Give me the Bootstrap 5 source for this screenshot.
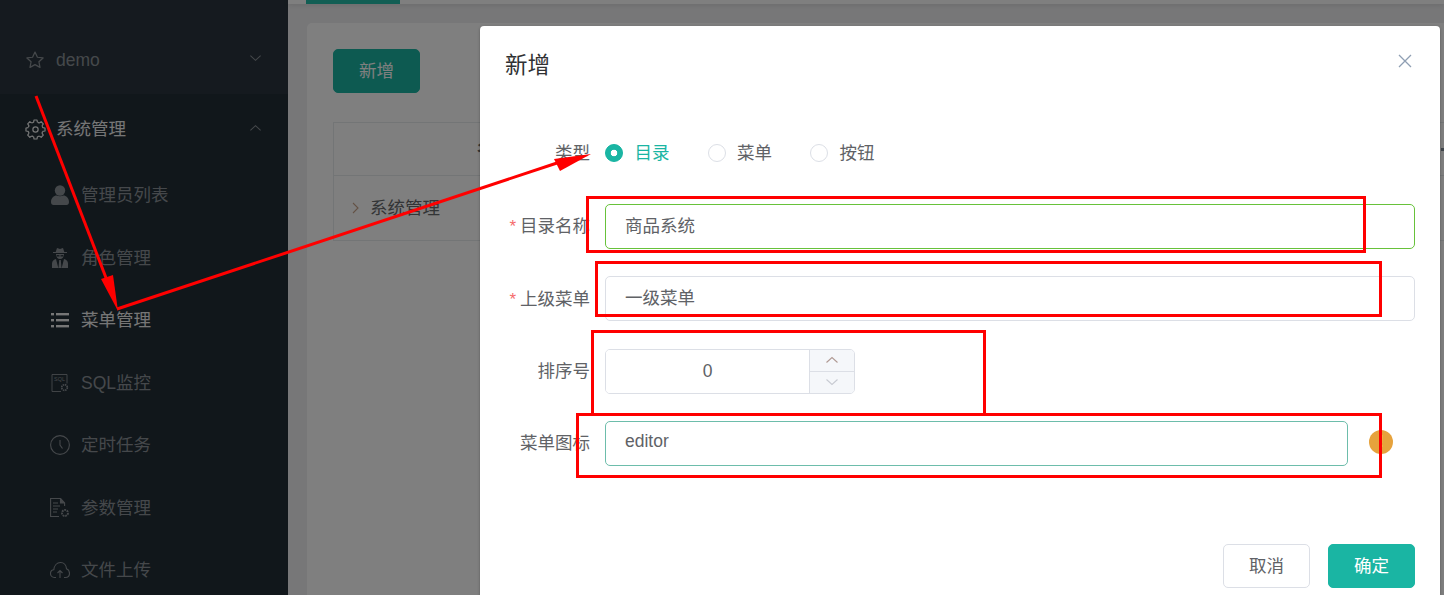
<!DOCTYPE html>
<html lang="zh">
<head>
<meta charset="utf-8">
<title>新增</title>
<link href="https://cdn.jsdelivr.net/npm/bootstrap@5.3.0/dist/css/bootstrap.min.css" rel="stylesheet">
<style>
html,body{height:595px;overflow:hidden}
body{font-family:"Liberation Sans","Noto Sans CJK SC",sans-serif;font-size:17.5px;color:#676a6c;background:#efeff1}
.stage{height:595px;width:1444px;overflow:hidden}
.side{width:288px;flex:none;background:#222e37;color:#8b9196;height:595px;overflow:hidden}
.side-top{height:94px;flex:none;background:#2a353e;padding:26px 26px 0 24px}
.side-group{height:70px;flex:none;padding:0 26px 0 24px;color:#eceded}
.side-top .ico,.side-group .ico{width:22px;margin-right:10px}
.chev{margin-left:auto;margin-top:-5px;display:flex}
.side-group .chev{margin-top:-3px;color:#8b9196}
.side-item{height:62.5px;padding-left:50px;flex:none}
.side-item .ico{width:20px;margin-right:11px}
.side-item.on{color:#eceded}
.ico{display:flex;justify-content:center;flex:none}
.content{flex:1;min-width:0;padding-left:19px}
.tabbar{height:4px;margin-left:-19px;background:#fff;box-shadow:0 1px 5px rgba(0,0,0,.12)}
.tabmark{width:94px;height:4px;margin-left:18px;background:#25bca8}
.sheet{margin-top:19px;margin-right:-40px;height:572px;overflow:hidden;background:#fff;border-radius:5px 5px 0 0;padding:26px}
.btn-teal{--bs-btn-bg:#1ab5a3;--bs-btn-border-color:#1ab5a3;--bs-btn-color:#fff;--bs-btn-hover-bg:#1ab5a3;--bs-btn-hover-border-color:#1ab5a3;--bs-btn-hover-color:#fff;--bs-btn-font-size:17.5px;--bs-btn-border-radius:5px;width:87px;height:44px;padding:0}
.btn-plain{--bs-btn-bg:#fff;--bs-btn-border-color:#dcdfe6;--bs-btn-color:#606266;--bs-btn-hover-bg:#fff;--bs-btn-hover-border-color:#dcdfe6;--bs-btn-hover-color:#606266;--bs-btn-font-size:17.5px;--bs-btn-border-radius:5px;width:87px;height:44px;padding:0}
.grid{margin-top:29px;width:1200px;margin-bottom:0;--bs-table-border-color:#e7eaec;color:#676a6c}
.grid th{height:53px;font-weight:600;vertical-align:middle;padding:0}
.grid td{height:65px;vertical-align:middle;padding:0 0 0 18px}
.grid .col-name{width:288px;padding-left:143px;white-space:nowrap}
.grid .col-rest{padding-left:819px}
.tree-row{gap:10px}
.tick{display:block;width:3px;height:3px;background:#7e8a96;margin-top:1px}
.veil{position:absolute;inset:0;background:rgba(0,0,0,.5)}
.dlg{position:absolute;left:480px;top:26px;width:960px;height:569px;background:#fff;border-radius:4px 4px 0 0;box-shadow:0 1px 3px rgba(0,0,0,.3);padding:0 25px}
.dlg-head{height:79px;padding-top:22px}
.dlg-title{font-size:22.5px;line-height:36px;color:#303133;margin:0;font-weight:400}
.closer{position:absolute;right:28px;top:28px;width:14px;height:14px;padding:0;border:0;background:none;display:flex}
.dlg-body{padding-top:25.5px}
.frow{margin-bottom:27.25px;min-height:45px}
.frow.first{margin-bottom:28.5px}
.flabel{width:85px;flex:none;margin:0;margin-right:15px;text-align:right;color:#606266;white-space:nowrap}
.flabel i{font-style:normal;color:#f56c6c;font-size:17px;line-height:1;margin-right:4px}
.ctl{flex:1;min-width:0}
.form-control.fld{height:45px;border-radius:5px;border-color:#dcdfe6;font-size:17.5px;color:#606266;padding:0 20px 3px 19px;box-shadow:none}
.form-control.fld.han{padding-bottom:5px}
.fld.ok{border-color:#67c23a}
.fld.foc{border-color:#6dbdab}
.radio-set{gap:38px}
.radio-opt{padding:0;margin:0;min-height:0;gap:11.5px;color:#606266}
.radio-opt .form-check-input{float:none;margin:0;width:18px;height:18px;border-color:#dcdfe6}
.radio-opt .form-check-input:checked{background-color:#1ab5a3;border-color:#1ab5a3;background-image:radial-gradient(circle,#fff 0,#fff 3px,#1ab5a3 3.6px)}
.radio-opt .form-check-label{line-height:24px}
.radio-opt.sel .form-check-label{color:#1ab5a3}
.spin{width:250px;height:45px;border:1px solid #dcdfe6;border-radius:5px;overflow:hidden}
.spin input{flex:1;min-width:0;border:0;outline:0;text-align:center;color:#606266;font-size:17.5px;background:#fff;padding:0}
.spin-btns{width:45px;flex:none;border-left:1px solid #dcdfe6;background:#f5f7fa}
.spin-btns span{flex:1;display:flex;align-items:center;justify-content:center}
.spin-btns span+span{border-top:1px solid #dcdfe6}
.warn{width:24px;height:24px;border-radius:50%;background:#e6a23c;color:#fff;font-size:16px;font-weight:700;flex:none;margin:-3px 22px 0 21px}
.dlg-foot{position:absolute;right:25px;top:518px;gap:18px}
.marks{position:absolute;left:0;top:0;pointer-events:none}
</style>
</head>
<body class="position-relative">
<div class="stage d-flex">
  <aside class="side d-flex flex-column">
    <div class="side-top d-flex align-items-center">
      <span class="ico"><svg width="20" height="20" viewBox="0 0 24 24" fill="none" stroke="currentColor" stroke-width="1.5" stroke-linejoin="round"><path d="M12 2.500l2.900 6.200 6.800.8-5 4.600 1.300 6.700L12 17.500l-6 3.300 1.300-6.700-5-4.600 6.800-.8z"/></svg></span>
      <span>demo</span>
      <span class="chev"><svg width="13" height="8" viewBox="0 0 14 8" fill="none" stroke="currentColor" stroke-width="1.100"><path d="M1.500 1.500L7 6.500l5.500-5"/></svg></span>
    </div>
    <div class="side-group d-flex align-items-center">
      <span class="ico"><svg width="21" height="21" viewBox="0 0 24 24" fill="none" stroke="currentColor" stroke-width="1.400" stroke-linejoin="round"><circle cx="12" cy="12" r="8.500" stroke-dasharray="0 2.225 2.225 2.225"/><path id="tooth" d="M9.800 3.790L10.280 1.130H13.720L14.200 3.790"/><path transform="rotate(45 12 12)" d="M9.800 3.790L10.280 1.130H13.720L14.200 3.790"/><path transform="rotate(90 12 12)" d="M9.800 3.790L10.280 1.130H13.720L14.200 3.790"/><path transform="rotate(135 12 12)" d="M9.800 3.790L10.280 1.130H13.720L14.200 3.790"/><path transform="rotate(180 12 12)" d="M9.800 3.790L10.280 1.130H13.720L14.200 3.790"/><path transform="rotate(225 12 12)" d="M9.800 3.790L10.280 1.130H13.720L14.200 3.790"/><path transform="rotate(270 12 12)" d="M9.800 3.790L10.280 1.130H13.720L14.200 3.790"/><path transform="rotate(315 12 12)" d="M9.800 3.790L10.280 1.130H13.720L14.200 3.790"/><circle cx="12" cy="12" r="3"/></svg></span>
      <span>系统管理</span>
      <span class="chev"><svg width="13" height="8" viewBox="0 0 14 8" fill="none" stroke="currentColor" stroke-width="1.100"><path d="M1.500 6.500L7 1.500l5.500 5"/></svg></span>
    </div>
    <div class="side-item d-flex align-items-center"><span class="ico"><svg width="18" height="20" viewBox="0 0 18 20" fill="currentColor"><circle cx="9" cy="5.500" r="5.200"/><path d="M0 17c0-4 3-6.500 5.500-6.500 2 1 5 1 7 0C15 10.500 18 13 18 17c0 1.800-1 3-2.500 3h-13C1 20 0 18.800 0 17z"/></svg></span><span>管理员列表</span></div>
    <div class="side-item d-flex align-items-center"><span class="ico"><svg width="16" height="20" viewBox="0 0 16 20" fill="currentColor"><path d="M5 0l3 1 3-1 1.300 4H15v1H1V4h2.700z"/><path fill-rule="evenodd" d="M4 6h8c0 3-1.700 5-4 5S4 9 4 6zm.8 1v1.500h2.700V7.300zm3.700.3v1.200h2.700V7z"/><path d="M0 20v-4.500C0 13 2 11.500 4 11l2.300 9zm16 0v-4.500c0-2.500-2-4-4-4.500l-2.300 9zM7.200 12h1.600l.7 8h-3z"/></svg></span><span>角色管理</span></div>
    <div class="side-item on d-flex align-items-center"><span class="ico"><svg width="18" height="16" viewBox="0 0 18 16" fill="currentColor"><rect x="0" y="1" width="3" height="2.400"/><rect x="5" y="1" width="13" height="2.400"/><rect x="0" y="7" width="3" height="2.400"/><rect x="5" y="7" width="13" height="2.400"/><rect x="0" y="13" width="3" height="2.400"/><rect x="5" y="13" width="13" height="2.400"/></svg></span><span>菜单管理</span></div>
    <div class="side-item d-flex align-items-center"><span class="ico"><svg width="18" height="18" viewBox="0 0 18 18" fill="none" stroke="currentColor"><path d="M10 17.500H1V.5h15v9" stroke-width=".9"/><text x="3" y="7" font-size="5.500" fill="currentColor" stroke="none" font-family="Liberation Sans">SQL</text><circle cx="13.500" cy="13.500" r="2.800" stroke-width="1.700" stroke-dasharray="1.500 .7"/></svg></span><span>SQL监控</span></div>
    <div class="side-item d-flex align-items-center"><span class="ico"><svg width="20" height="20" viewBox="0 0 20 20" fill="none" stroke="currentColor" stroke-width="1.100"><circle cx="10" cy="10" r="9.400"/><path d="M10 5v5l2.500 3.500"/></svg></span><span>定时任务</span></div>
    <div class="side-item d-flex align-items-center"><span class="ico"><svg width="20" height="20" viewBox="0 0 20 20" fill="none" stroke="currentColor" stroke-width="1.100"><path d="M9 18.500H.6V.5h10l4 4.500v3"/><path d="M10.500.5v4.500h4" fill="currentColor"/><path d="M3 5h5M3 8h7M3 11h5M3 14h4"/><circle cx="15" cy="15" r="3" stroke-width="1.900" stroke-dasharray="1.800 .8"/></svg></span><span>参数管理</span></div>
    <div class="side-item d-flex align-items-center"><span class="ico"><svg width="20" height="18" viewBox="0 0 20 18" fill="none" stroke="currentColor" stroke-width="1.100"><path d="M6 16.500H4.500C2 16.500.5 14.500.5 12.500c0-2 1.500-3.500 3.300-3.700C4.200 4.500 7 1.500 10.500 1.500s5.800 2.800 6 6.300c1.800.7 3 2.500 3 4.500 0 2.500-1.800 4.200-4 4.200H14"/><path d="M10 17v-7M7.500 12L10 9.500l2.500 2.500"/></svg></span><span>文件上传</span></div>
  </aside>
  <main class="content">
    <div class="tabbar"><div class="tabmark"></div></div>
    <section class="sheet">
      <button class="btn btn-teal" type="button">新增</button>
      <table class="table table-bordered grid">
        <thead><tr><th class="col-name">名称</th><th class="col-rest"><span class="tick"></span></th></tr></thead>
        <tbody><tr><td><span class="d-inline-flex align-items-center tree-row"><svg width="8" height="12" viewBox="0 0 8 12" fill="none" stroke="#c9a48a" stroke-width="1.100"><path d="M1 1l5 5-5 5"/></svg><span>系统管理</span></span></td><td></td></tr></tbody>
      </table>
    </section>
  </main>
</div>
<div class="veil"></div>
<div class="dlg">
  <div class="dlg-head"><h5 class="dlg-title">新增</h5></div>
  <button class="closer" type="button" aria-label="关闭"><svg width="14" height="14" viewBox="0 0 14 14" stroke="#8f9fb3" stroke-width="1.300" fill="none"><path d="M1 1l12 12M13 1L1 13"/></svg></button>
  <form class="dlg-body">
    <div class="frow first d-flex align-items-center">
      <label class="flabel">类型</label>
      <div class="ctl d-flex radio-set">
        <div class="form-check radio-opt sel d-flex align-items-center"><input class="form-check-input" type="radio" name="kind" id="k1" checked><label class="form-check-label" for="k1">目录</label></div>
        <div class="form-check radio-opt d-flex align-items-center"><input class="form-check-input" type="radio" name="kind" id="k2"><label class="form-check-label" for="k2">菜单</label></div>
        <div class="form-check radio-opt d-flex align-items-center"><input class="form-check-input" type="radio" name="kind" id="k3"><label class="form-check-label" for="k3">按钮</label></div>
      </div>
    </div>
    <div class="frow d-flex align-items-center">
      <label class="flabel"><i>*</i>目录名称</label>
      <div class="ctl"><input class="form-control fld han ok" value="商品系统"></div>
    </div>
    <div class="frow d-flex align-items-center">
      <label class="flabel"><i>*</i>上级菜单</label>
      <div class="ctl"><input class="form-control fld han" value="一级菜单"></div>
    </div>
    <div class="frow d-flex align-items-center">
      <label class="flabel">排序号</label>
      <div class="spin d-flex">
        <input value="0">
        <div class="spin-btns d-flex flex-column">
          <span><svg width="14" height="8" viewBox="0 0 14 8" fill="none" stroke="#b09a94" stroke-width="1.100"><path d="M1.500 6.500L7 1.500l5.500 5"/></svg></span>
          <span><svg width="14" height="8" viewBox="0 0 14 8" fill="none" stroke="#c8cbd2" stroke-width="1.100"><path d="M1.500 1.500L7 6.500l5.500-5"/></svg></span>
        </div>
      </div>
    </div>
    <div class="frow d-flex align-items-center">
      <label class="flabel">菜单图标</label>
      <div class="ctl"><input class="form-control fld foc" value="editor"></div>
      <span class="warn d-flex align-items-center justify-content-center">!</span>
    </div>
  </form>
  <div class="dlg-foot d-flex">
    <button class="btn btn-plain" type="button">取消</button>
    <button class="btn btn-teal" type="button">确定</button>
  </div>
</div>
<svg class="marks" width="1444" height="595" viewBox="0 0 1444 595" fill="none" stroke="#ff0000" stroke-width="3">
  <path d="M36 96L113 296"/>
  <path fill="#ff0000" stroke="none" d="M118 311L101 279L113 275z"/>
  <path d="M117 309L560 162"/>
  <path fill="#ff0000" stroke="none" d="M591 154L560 171L554 159z"/>
  <rect x="587.500" y="197.500" width="777" height="54"/>
  <rect x="596.500" y="262.500" width="784" height="53"/>
  <path d="M592.500 414V331.500H984.500V414"/>
  <rect x="577.500" y="414.500" width="803" height="62"/>
</svg>
<script src="https://cdn.jsdelivr.net/npm/bootstrap@5.3.0/dist/js/bootstrap.bundle.min.js"></script>
</body>
</html>
